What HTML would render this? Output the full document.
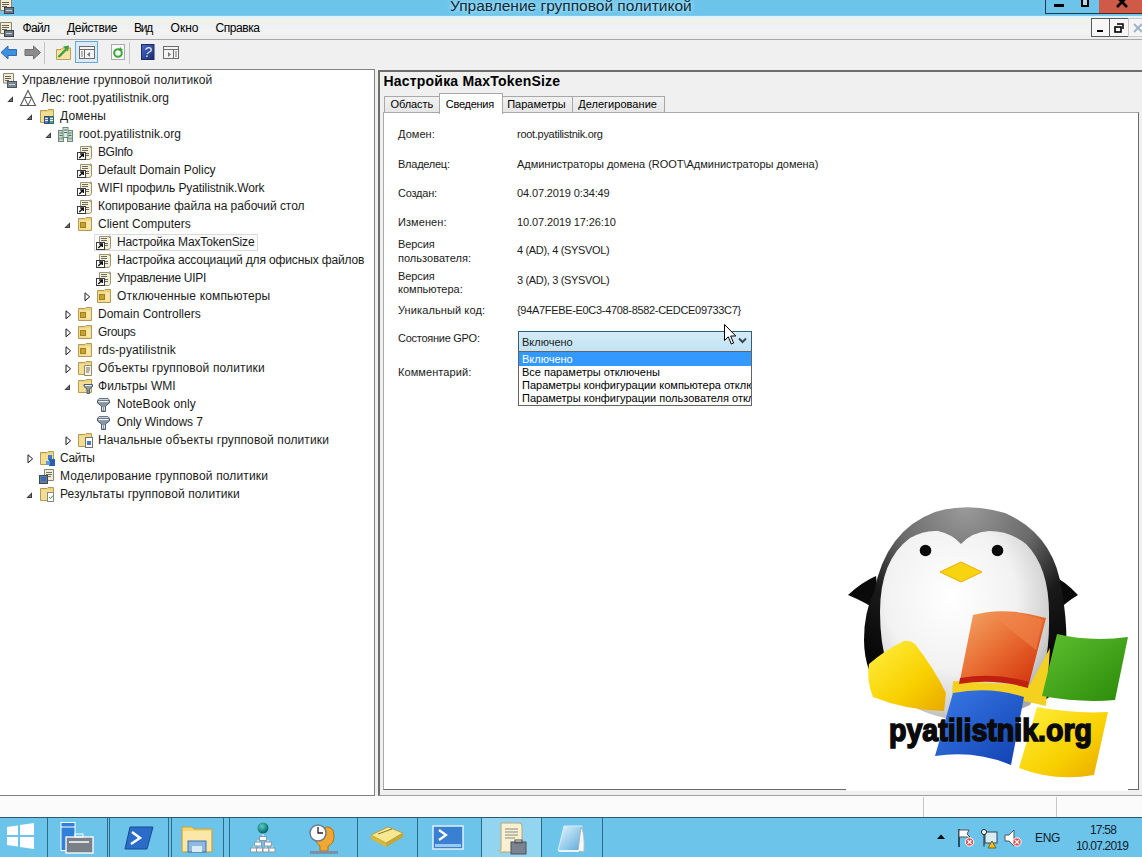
<!DOCTYPE html>
<html><head><meta charset="utf-8"><style>
*{margin:0;padding:0;box-sizing:border-box}
html,body{width:1142px;height:857px;overflow:hidden;background:#f0f0f0;font-family:"Liberation Sans",sans-serif;color:#000}
.a{position:absolute}
.t12{font-size:12px;line-height:18px;white-space:nowrap}
.t11{font-size:11px;line-height:13px;white-space:nowrap}
svg{position:absolute;overflow:visible}
</style></head><body>

<div class="a" style="left:0;top:0;width:1142px;height:16px;background:#6cc4ea"></div>
<div class="a" style="left:0;top:15px;width:1142px;height:1px;background:#7ccbec"></div>
<div class="a" style="left:450px;top:-3px;font-size:15.5px;line-height:18px;color:#0e2a3a;white-space:nowrap;text-shadow:0 0 4px #bfeaf8,0 0 6px #a8e0f4">Управление групповой политикой</div>
<div class="a" style="left:1045px;top:-2px;width:29px;height:16px;border:1.5px solid #1a3d52;background:#6cc4ea"></div>
<div class="a" style="left:1054px;top:4px;width:10px;height:3px;background:#000"></div>
<div class="a" style="left:1072px;top:-2px;width:28px;height:16px;border:1.5px solid #1a3d52;border-left:none;background:#6cc4ea"></div>
<div class="a" style="left:1081px;top:-2px;width:8px;height:9px;border:2px solid #000;background:#b9d7e6"></div>
<div class="a" style="left:1099px;top:-2px;width:43px;height:16px;background:#cf5a48;border-bottom:1.5px solid #4a2a28"></div>
<svg style="left:1116px;top:-3px" width="12" height="11"><path d="M1 0 L11 10 M11 0 L1 10" stroke="#000" stroke-width="2.6"/></svg>
<svg style="left:-1px;top:-2px" width="16" height="16"><path d="M1.5 1.5 H11 Q13 0.5 12.5 3 V12.5 H1.5Z" fill="#f3ecd0" stroke="#8a8470"/><path d="M3 4.5h7M3 6.5h7M3 8.5h5" stroke="#606060"/><rect x="5.5" y="9.5" width="9" height="6" fill="#6f7a86" stroke="#3a4450"/><path d="M7 12.5h6" stroke="#c8d0d8"/></svg>
<div class="a" style="left:0;top:16px;width:1142px;height:23px;background:linear-gradient(#dcf3fb 0px,#f3f3ea 5px,#f2f0e6 7px,#e9f3fb 11px,#f4f1ee 14px,#f1f1f1 18px,#ededed 23px)"></div>
<div class="a" style="left:0;top:39px;width:1142px;height:1px;background:#a8a8a8"></div>
<svg style="left:-1px;top:21px" width="16" height="16"><path d="M1.5 1.5 H11 Q13 0.5 12.5 3 V12.5 H1.5Z" fill="#f3ecd0" stroke="#8a8470"/><path d="M3 4.5h7M3 6.5h7M3 8.5h5" stroke="#606060"/><rect x="5.5" y="9.5" width="9" height="6" fill="#6f7a86" stroke="#3a4450"/><path d="M7 12.5h6" stroke="#c8d0d8"/></svg>
<div class="a t12" style="left:22.5px;top:19px;letter-spacing:-0.633px;">Файл</div>
<div class="a t12" style="left:67px;top:19px;letter-spacing:-0.321px;">Действие</div>
<div class="a t12" style="left:134px;top:19px;letter-spacing:-1.202px;">Вид</div>
<div class="a t12" style="left:170.5px;top:19px;letter-spacing:0.042px;">Окно</div>
<div class="a t12" style="left:215.5px;top:19px;letter-spacing:-0.430px;">Справка</div>
<div class="a" style="left:1091px;top:18px;width:19px;height:19px;border:1px solid #5a5a5a;background:#f7f7f7"></div>
<div class="a" style="left:1097px;top:30px;width:6px;height:2px;background:#000"></div>
<div class="a" style="left:1109px;top:18px;width:20px;height:19px;border:1px solid #5a5a5a;background:#f7f7f7"></div>
<svg style="left:1114px;top:23px" width="10" height="10"><path d="M3 1h6v5" fill="none" stroke="#000" stroke-width="1.5"/><rect x="1" y="4" width="6" height="5" fill="none" stroke="#000" stroke-width="1.6"/></svg>
<div class="a" style="left:1128px;top:18px;width:14px;height:19px;border:1px solid #c8c8c8;border-right:none;background:#f5f5f5"></div>
<svg style="left:1133px;top:23px" width="10" height="10"><path d="M1 1L9 9M9 1L1 9" stroke="#9fb4c8" stroke-width="2"/></svg>
<div class="a" style="left:0;top:40px;width:1142px;height:28px;background:#f0f0f0"></div>
<svg style="left:0;top:45px" width="18" height="15"><path d="M1 7.5 L8 1 V4.5 H16.5 V10.5 H8 V14 Z" fill="#3f8fdc" stroke="#2a6cb0" stroke-width="1"/></svg>
<svg style="left:24px;top:45px" width="18" height="15"><path d="M16.5 7.5 L9.5 1 V4.5 H1 V10.5 H9.5 V14 Z" fill="#8c8c8c" stroke="#6e6e6e" stroke-width="1"/></svg>
<div class="a" style="left:44px;top:42px;width:1px;height:22px;background:#c5c5c5"></div>
<svg style="left:55px;top:44px" width="17" height="17"><path d="M1.5 5.5 H6 L7.5 4 H15.5 V15.5 H1.5Z" fill="#f2d98a" stroke="#c0a050"/><rect x="2" y="7" width="13" height="8" fill="#f6e3a8"/><path d="M3.5 13 L11 5.5" stroke="#3aa040" stroke-width="2.4"/><path d="M8 2.5 L14 1.5 L13 7.5Z" fill="#3aa040"/></svg>
<div class="a" style="left:75px;top:41px;width:23px;height:22px;border:1px solid #69a7d4;background:#d7ebf8"></div>
<svg style="left:79px;top:46px" width="16" height="13"><rect x="0.5" y="0.5" width="15" height="12" fill="#f4f4f4" stroke="#6d6d6d"/><path d="M0.5 3.5h15M5.5 3.5v9" stroke="#6d6d6d"/><path d="M2 6h2M2 8h2M2 10h2" stroke="#777"/><path d="M11 6 L8 8.5 L11 11Z" fill="#777"/></svg>
<svg style="left:111px;top:44px" width="14" height="16"><rect x="0.5" y="0.5" width="13" height="15" fill="#f8f8f8" stroke="#aaa"/><circle cx="7" cy="9" r="3.8" fill="none" stroke="#3aa63a" stroke-width="2"/><path d="M9 3 L12 6 L8 7Z" fill="#3aa63a"/></svg>
<div class="a" style="left:129px;top:42px;width:1px;height:22px;background:#c5c5c5"></div>
<svg style="left:141px;top:44px" width="14" height="16"><defs><linearGradient id="hq" x1="0" y1="0" x2="1" y2="1"><stop offset="0" stop-color="#4a6cc8"/><stop offset="1" stop-color="#1a2a70"/></linearGradient></defs><rect x="0.5" y="0.5" width="12.5" height="15" fill="url(#hq)" stroke="#1d2a66"/><text x="6.8" y="13" font-size="14" font-family="Liberation Sans" font-style="italic" fill="#dfe8ff" text-anchor="middle">?</text></svg>
<svg style="left:163px;top:46px" width="17" height="13"><rect x="0.5" y="0.5" width="15" height="12" fill="#f4f4f4" stroke="#6d6d6d"/><path d="M0.5 3.5h15M10.5 3.5v9" stroke="#6d6d6d"/><path d="M12 6h2M12 8h2M12 10h2" stroke="#777"/><path d="M5 6 L8 8.5 L5 11Z" fill="#777"/></svg>
<div class="a" style="left:0;top:69px;width:375px;height:727px;background:#fff;border-top:1px solid #828282;border-right:1px solid #828282;border-bottom:1px solid #828282"></div>
<svg style="left:1px;top:72px" width="16" height="16"><path d="M2.5 1.5 H11 Q13 0.5 12.5 3 V11 H2.5Z" fill="#f3ecd0" stroke="#8a8470"/><path d="M4 4.5h6M4 6.5h6M4 8.5h4" stroke="#606060"/><rect x="6.5" y="9.5" width="9" height="6" fill="#7a8794" stroke="#4a5560"/><path d="M8 12.5h6" stroke="#c8d0d8"/></svg>
<div class="a t12" style="left:22px;top:71px;color:#1a1a1a;letter-spacing:0.109px;">Управление групповой политикой</div>
<svg style="left:7px;top:96px" width="7" height="7"><path d="M6 0.3 V6 H0.3Z" fill="#3a3a3a"/><path d="M5 2.5 V5 H2.5Z" fill="#7a7a7a"/></svg>
<svg style="left:20px;top:90px" width="17" height="17"><path d="M8 0.5 L15.5 15.5 H0.5Z" fill="#fafafa" stroke="#5a5a5a" stroke-width="1.1" stroke-linejoin="miter"/><path d="M4.2 7.5 H11.8 L8 15.2Z" fill="#fff" stroke="#5a5a5a" stroke-width="1"/></svg>
<div class="a t12" style="left:41px;top:89px;color:#1a1a1a;letter-spacing:0.031px;">Лес: root.pyatilistnik.org</div>
<svg style="left:26px;top:114px" width="7" height="7"><path d="M6 0.3 V6 H0.3Z" fill="#3a3a3a"/><path d="M5 2.5 V5 H2.5Z" fill="#7a7a7a"/></svg>
<svg style="left:39px;top:108px" width="16" height="16"><path d="M1.5 2.5 H8 L9 1.5 H14.5 V14.5 H1.5Z" fill="#ecd27c" stroke="#b49a54"/><rect x="2" y="4" width="12" height="10" fill="#f3dd92"/><rect x="5.5" y="8.5" width="4" height="7" fill="#5a7aa8" stroke="#33507a"/><rect x="10.5" y="8.5" width="4" height="7" fill="#5a9a98" stroke="#336a68"/><path d="M6 10.5h3M6 12.5h3M11 10.5h3M11 12.5h3" stroke="#e8f0f8"/></svg>
<div class="a t12" style="left:60px;top:107px;color:#1a1a1a;letter-spacing:0.138px;">Домены</div>
<svg style="left:45px;top:132px" width="7" height="7"><path d="M6 0.3 V6 H0.3Z" fill="#3a3a3a"/><path d="M5 2.5 V5 H2.5Z" fill="#7a7a7a"/></svg>
<svg style="left:58px;top:126px" width="16" height="16"><rect x="0.5" y="4.5" width="5" height="11" fill="#c8dcd0" stroke="#6a8a78"/><rect x="9.5" y="4.5" width="5" height="11" fill="#c8dcd0" stroke="#6a8a78"/><rect x="5" y="1.5" width="5" height="10" fill="#d8e8e0" stroke="#6a8a78"/><path d="M1.5 7h3M1.5 9.5h3M10.5 7h3M10.5 9.5h3M6 4h3M6 6.5h3" stroke="#506a5a"/><path d="M1 12.5h4M10 12.5h4" stroke="#90aa98" stroke-width="2"/></svg>
<div class="a t12" style="left:79px;top:125px;color:#1a1a1a;letter-spacing:0.098px;">root.pyatilistnik.org</div>
<svg style="left:77px;top:144px" width="16" height="16"><path d="M3.5 2.5 H12.5 Q14.5 1 14.5 3 V13.5 Q14 15.5 12 15.5 H3.5Z" fill="#f4efd2" stroke="#9a9478"/><path d="M12.5 2.5 Q12.5 4 14.5 3.5" fill="none" stroke="#9a9478"/><path d="M5 4.5h6M5 6.5h6M9 9.5h3M9 11.5h3" stroke="#6a6a6a" stroke-width="1"/><rect x="0.5" y="8.5" width="8" height="7" fill="#fff" stroke="#3a3a3a"/><path d="M2.3 14 L6 10.3 M3.2 10 H6.3 V13" stroke="#101010" stroke-width="1.4" fill="none"/></svg>
<div class="a t12" style="left:98px;top:143px;color:#1a1a1a;letter-spacing:-0.466px;">BGInfo</div>
<svg style="left:77px;top:162px" width="16" height="16"><path d="M3.5 2.5 H12.5 Q14.5 1 14.5 3 V13.5 Q14 15.5 12 15.5 H3.5Z" fill="#f4efd2" stroke="#9a9478"/><path d="M12.5 2.5 Q12.5 4 14.5 3.5" fill="none" stroke="#9a9478"/><path d="M5 4.5h6M5 6.5h6M9 9.5h3M9 11.5h3" stroke="#6a6a6a" stroke-width="1"/><rect x="0.5" y="8.5" width="8" height="7" fill="#fff" stroke="#3a3a3a"/><path d="M2.3 14 L6 10.3 M3.2 10 H6.3 V13" stroke="#101010" stroke-width="1.4" fill="none"/></svg>
<div class="a t12" style="left:98px;top:161px;color:#1a1a1a;letter-spacing:-0.022px;">Default Domain Policy</div>
<svg style="left:77px;top:180px" width="16" height="16"><path d="M3.5 2.5 H12.5 Q14.5 1 14.5 3 V13.5 Q14 15.5 12 15.5 H3.5Z" fill="#f4efd2" stroke="#9a9478"/><path d="M12.5 2.5 Q12.5 4 14.5 3.5" fill="none" stroke="#9a9478"/><path d="M5 4.5h6M5 6.5h6M9 9.5h3M9 11.5h3" stroke="#6a6a6a" stroke-width="1"/><rect x="0.5" y="8.5" width="8" height="7" fill="#fff" stroke="#3a3a3a"/><path d="M2.3 14 L6 10.3 M3.2 10 H6.3 V13" stroke="#101010" stroke-width="1.4" fill="none"/></svg>
<div class="a t12" style="left:98px;top:179px;color:#1a1a1a;letter-spacing:-0.098px;">WIFI профиль Pyatilistnik.Work</div>
<svg style="left:77px;top:198px" width="16" height="16"><path d="M3.5 2.5 H12.5 Q14.5 1 14.5 3 V13.5 Q14 15.5 12 15.5 H3.5Z" fill="#f4efd2" stroke="#9a9478"/><path d="M12.5 2.5 Q12.5 4 14.5 3.5" fill="none" stroke="#9a9478"/><path d="M5 4.5h6M5 6.5h6M9 9.5h3M9 11.5h3" stroke="#6a6a6a" stroke-width="1"/><rect x="0.5" y="8.5" width="8" height="7" fill="#fff" stroke="#3a3a3a"/><path d="M2.3 14 L6 10.3 M3.2 10 H6.3 V13" stroke="#101010" stroke-width="1.4" fill="none"/></svg>
<div class="a t12" style="left:98px;top:197px;color:#1a1a1a;letter-spacing:-0.037px;">Копирование файла на рабочий стол</div>
<svg style="left:64px;top:222px" width="7" height="7"><path d="M6 0.3 V6 H0.3Z" fill="#3a3a3a"/><path d="M5 2.5 V5 H2.5Z" fill="#7a7a7a"/></svg>
<svg style="left:77px;top:216px" width="16" height="16"><path d="M1.5 2.5 H8 L9 1.5 H14.5 V14.5 H1.5Z" fill="#ecd27c" stroke="#b49a54"/><rect x="2" y="4" width="12" height="10" fill="#f3dd92"/><rect x="3.5" y="6.5" width="5" height="5" fill="#c8a22c" stroke="#a08020"/><rect x="9.5" y="5" width="4" height="8" fill="#f8e8a8"/></svg>
<div class="a t12" style="left:98px;top:215px;color:#1a1a1a;letter-spacing:-0.000px;">Client Computers</div>
<div class="a" style="left:94px;top:234px;width:164px;height:17px;border:1px solid #dadada;background:#fbfbfb"></div>
<svg style="left:96px;top:234px" width="16" height="16"><path d="M3.5 2.5 H12.5 Q14.5 1 14.5 3 V13.5 Q14 15.5 12 15.5 H3.5Z" fill="#f4efd2" stroke="#9a9478"/><path d="M12.5 2.5 Q12.5 4 14.5 3.5" fill="none" stroke="#9a9478"/><path d="M5 4.5h6M5 6.5h6M9 9.5h3M9 11.5h3" stroke="#6a6a6a" stroke-width="1"/><rect x="0.5" y="8.5" width="8" height="7" fill="#fff" stroke="#3a3a3a"/><path d="M2.3 14 L6 10.3 M3.2 10 H6.3 V13" stroke="#101010" stroke-width="1.4" fill="none"/></svg>
<div class="a t12" style="left:117px;top:233px;color:#1a1a1a;letter-spacing:-0.135px;">Настройка MaxTokenSize</div>
<svg style="left:96px;top:252px" width="16" height="16"><path d="M3.5 2.5 H12.5 Q14.5 1 14.5 3 V13.5 Q14 15.5 12 15.5 H3.5Z" fill="#f4efd2" stroke="#9a9478"/><path d="M12.5 2.5 Q12.5 4 14.5 3.5" fill="none" stroke="#9a9478"/><path d="M5 4.5h6M5 6.5h6M9 9.5h3M9 11.5h3" stroke="#6a6a6a" stroke-width="1"/><rect x="0.5" y="8.5" width="8" height="7" fill="#fff" stroke="#3a3a3a"/><path d="M2.3 14 L6 10.3 M3.2 10 H6.3 V13" stroke="#101010" stroke-width="1.4" fill="none"/></svg>
<div class="a t12" style="left:117px;top:251px;color:#1a1a1a;letter-spacing:-0.143px;">Настройка ассоциаций для офисных файлов</div>
<svg style="left:96px;top:270px" width="16" height="16"><path d="M3.5 2.5 H12.5 Q14.5 1 14.5 3 V13.5 Q14 15.5 12 15.5 H3.5Z" fill="#f4efd2" stroke="#9a9478"/><path d="M12.5 2.5 Q12.5 4 14.5 3.5" fill="none" stroke="#9a9478"/><path d="M5 4.5h6M5 6.5h6M9 9.5h3M9 11.5h3" stroke="#6a6a6a" stroke-width="1"/><rect x="0.5" y="8.5" width="8" height="7" fill="#fff" stroke="#3a3a3a"/><path d="M2.3 14 L6 10.3 M3.2 10 H6.3 V13" stroke="#101010" stroke-width="1.4" fill="none"/></svg>
<div class="a t12" style="left:117px;top:269px;color:#1a1a1a;letter-spacing:-0.290px;">Управление UIPI</div>
<svg style="left:84px;top:292px" width="7" height="10"><path d="M1 0.8 L5.6 4.8 L1 8.8Z" fill="#fff" stroke="#1a1a1a" stroke-width="1"/></svg>
<svg style="left:96px;top:288px" width="16" height="16"><path d="M1.5 2.5 H8 L9 1.5 H14.5 V14.5 H1.5Z" fill="#ecd27c" stroke="#b49a54"/><rect x="2" y="4" width="12" height="10" fill="#f3dd92"/><rect x="3.5" y="6.5" width="5" height="5" fill="#c8a22c" stroke="#a08020"/><rect x="9.5" y="5" width="4" height="8" fill="#f8e8a8"/></svg>
<div class="a t12" style="left:117px;top:287px;color:#1a1a1a;letter-spacing:0.158px;">Отключенные компьютеры</div>
<svg style="left:65px;top:310px" width="7" height="10"><path d="M1 0.8 L5.6 4.8 L1 8.8Z" fill="#fff" stroke="#1a1a1a" stroke-width="1"/></svg>
<svg style="left:77px;top:306px" width="16" height="16"><path d="M1.5 2.5 H8 L9 1.5 H14.5 V14.5 H1.5Z" fill="#ecd27c" stroke="#b49a54"/><rect x="2" y="4" width="12" height="10" fill="#f3dd92"/><rect x="3.5" y="6.5" width="5" height="5" fill="#c8a22c" stroke="#a08020"/><rect x="9.5" y="5" width="4" height="8" fill="#f8e8a8"/></svg>
<div class="a t12" style="left:98px;top:305px;color:#1a1a1a;letter-spacing:-0.001px;">Domain Controllers</div>
<svg style="left:65px;top:328px" width="7" height="10"><path d="M1 0.8 L5.6 4.8 L1 8.8Z" fill="#fff" stroke="#1a1a1a" stroke-width="1"/></svg>
<svg style="left:77px;top:324px" width="16" height="16"><path d="M1.5 2.5 H8 L9 1.5 H14.5 V14.5 H1.5Z" fill="#ecd27c" stroke="#b49a54"/><rect x="2" y="4" width="12" height="10" fill="#f3dd92"/><rect x="3.5" y="6.5" width="5" height="5" fill="#c8a22c" stroke="#a08020"/><rect x="9.5" y="5" width="4" height="8" fill="#f8e8a8"/></svg>
<div class="a t12" style="left:98px;top:323px;color:#1a1a1a;letter-spacing:-0.309px;">Groups</div>
<svg style="left:65px;top:346px" width="7" height="10"><path d="M1 0.8 L5.6 4.8 L1 8.8Z" fill="#fff" stroke="#1a1a1a" stroke-width="1"/></svg>
<svg style="left:77px;top:342px" width="16" height="16"><path d="M1.5 2.5 H8 L9 1.5 H14.5 V14.5 H1.5Z" fill="#ecd27c" stroke="#b49a54"/><rect x="2" y="4" width="12" height="10" fill="#f3dd92"/><rect x="3.5" y="6.5" width="5" height="5" fill="#c8a22c" stroke="#a08020"/><rect x="9.5" y="5" width="4" height="8" fill="#f8e8a8"/></svg>
<div class="a t12" style="left:98px;top:341px;color:#1a1a1a;letter-spacing:0.111px;">rds-pyatilistnik</div>
<svg style="left:65px;top:364px" width="7" height="10"><path d="M1 0.8 L5.6 4.8 L1 8.8Z" fill="#fff" stroke="#1a1a1a" stroke-width="1"/></svg>
<svg style="left:77px;top:360px" width="16" height="16"><path d="M1.5 2.5 H8 L9 1.5 H14.5 V14.5 H1.5Z" fill="#ecd27c" stroke="#b49a54"/><rect x="2" y="4" width="12" height="10" fill="#f3dd92"/><path d="M7.5 5.5 H14.5 V15.5 H7.5Z" fill="#f8f3dc" stroke="#8f8a72"/><path d="M9 8h4M9 10h4M9 12h3" stroke="#707070"/></svg>
<div class="a t12" style="left:98px;top:359px;color:#1a1a1a;letter-spacing:0.140px;">Объекты групповой политики</div>
<svg style="left:64px;top:384px" width="7" height="7"><path d="M6 0.3 V6 H0.3Z" fill="#3a3a3a"/><path d="M5 2.5 V5 H2.5Z" fill="#7a7a7a"/></svg>
<svg style="left:77px;top:378px" width="16" height="16"><path d="M1.5 2.5 H8 L9 1.5 H14.5 V14.5 H1.5Z" fill="#ecd27c" stroke="#b49a54"/><rect x="2" y="4" width="12" height="10" fill="#f3dd92"/><path d="M7 6.5 H15.5 V8.5 L12.5 11 V15.5 H10 V11 L7 8.5Z" fill="#8a9aa8" stroke="#4e5c68"/><path d="M8 7.5h6.5" stroke="#e8f0f4"/></svg>
<div class="a t12" style="left:98px;top:377px;color:#1a1a1a;letter-spacing:0.078px;">Фильтры WMI</div>
<svg style="left:96px;top:396px" width="16" height="17"><path d="M1.5 4.5 H13.5 V7 L9.5 10 V15.5 H5.5 V10 L1.5 7Z" fill="#8796a4" stroke="#4e5c68"/><path d="M2.5 5.5 H12.5" stroke="#f0f4f8" stroke-width="1.2"/><path d="M3 2.5 H12 L13.5 4.5 H1.5Z" fill="#c8d4dc" stroke="#6a7884"/><path d="M6.5 11v3.5M8.5 11v3.5" stroke="#d8e2ea"/></svg>
<div class="a t12" style="left:117px;top:395px;color:#1a1a1a;letter-spacing:0.056px;">NoteBook only</div>
<svg style="left:96px;top:414px" width="16" height="17"><path d="M1.5 4.5 H13.5 V7 L9.5 10 V15.5 H5.5 V10 L1.5 7Z" fill="#8796a4" stroke="#4e5c68"/><path d="M2.5 5.5 H12.5" stroke="#f0f4f8" stroke-width="1.2"/><path d="M3 2.5 H12 L13.5 4.5 H1.5Z" fill="#c8d4dc" stroke="#6a7884"/><path d="M6.5 11v3.5M8.5 11v3.5" stroke="#d8e2ea"/></svg>
<div class="a t12" style="left:117px;top:413px;color:#1a1a1a;letter-spacing:-0.053px;">Only Windows 7</div>
<svg style="left:65px;top:436px" width="7" height="10"><path d="M1 0.8 L5.6 4.8 L1 8.8Z" fill="#fff" stroke="#1a1a1a" stroke-width="1"/></svg>
<svg style="left:77px;top:432px" width="16" height="16"><path d="M1.5 2.5 H8 L9 1.5 H14.5 V14.5 H1.5Z" fill="#ecd27c" stroke="#b49a54"/><rect x="2" y="4" width="12" height="10" fill="#f3dd92"/><rect x="8.5" y="5.5" width="7" height="10" fill="#fff" stroke="#707070"/><rect x="10" y="9" width="4" height="4" fill="#4a7cc8"/></svg>
<div class="a t12" style="left:98px;top:431px;color:#1a1a1a;letter-spacing:0.110px;">Начальные объекты групповой политики</div>
<svg style="left:27px;top:454px" width="7" height="10"><path d="M1 0.8 L5.6 4.8 L1 8.8Z" fill="#fff" stroke="#1a1a1a" stroke-width="1"/></svg>
<svg style="left:39px;top:450px" width="16" height="16"><path d="M1.5 2.5 H8 L9 1.5 H14.5 V14.5 H1.5Z" fill="#ecd27c" stroke="#b49a54"/><rect x="2" y="4" width="12" height="10" fill="#f3dd92"/><rect x="9" y="5" width="4" height="5" fill="#3b7ad0"/><rect x="10" y="9" width="6" height="7" fill="#2a5fb0"/><rect x="7" y="11" width="4" height="4" fill="#5a9ae0"/></svg>
<div class="a t12" style="left:60px;top:449px;color:#1a1a1a;letter-spacing:-0.378px;">Сайты</div>
<svg style="left:39px;top:468px" width="16" height="16"><path d="M5.5 1.5 H14.5 V12.5 H5.5Z" fill="#f3ecd0" stroke="#8a8470"/><path d="M7 4.5h6M7 6.5h6M7 8.5h5" stroke="#707070"/><rect x="0.5" y="7.5" width="8" height="8" fill="#6a7a8a" stroke="#3a4a5a"/><rect x="2" y="9" width="5" height="4" fill="#3a6ac0"/></svg>
<div class="a t12" style="left:60px;top:467px;color:#1a1a1a;letter-spacing:0.145px;">Моделирование групповой политики</div>
<svg style="left:26px;top:492px" width="7" height="7"><path d="M6 0.3 V6 H0.3Z" fill="#3a3a3a"/><path d="M5 2.5 V5 H2.5Z" fill="#7a7a7a"/></svg>
<svg style="left:39px;top:486px" width="16" height="16"><path d="M1.5 2.5 H8 L9 1.5 H14.5 V14.5 H1.5Z" fill="#ecd27c" stroke="#b49a54"/><rect x="2" y="4" width="12" height="10" fill="#f3dd92"/><rect x="8.5" y="6.5" width="6" height="9" fill="#fff" stroke="#888"/><path d="M10 11l1.5 1.5 2.5-3" stroke="#3a8a3a" fill="none"/></svg>
<div class="a t12" style="left:60px;top:485px;color:#1a1a1a;letter-spacing:0.101px;">Результаты групповой политики</div>
<div class="a" style="left:378px;top:69.5px;width:764px;height:726.5px;background:#f0f0f0;border-top:2px solid #6e6e6e;border-left:2px solid #6e6e6e;border-bottom:1px solid #a0a0a0"></div>
<div class="a" style="left:383.5px;top:69px;font-size:14px;line-height:24px;font-weight:bold;letter-spacing:0.2px;white-space:nowrap">Настройка MaxTokenSize</div>
<div class="a" style="left:383px;top:112px;width:756px;height:678px;background:#fff;border:1px solid #a8a8a8;border-right:1px solid #6a6a6a;border-bottom:1px solid #6a6a6a"></div>
<div class="a" style="left:384px;top:95.5px;width:56px;height:17.5px;background:linear-gradient(#f2f2f2,#e6e6e6);border:1px solid #a8a8a8"></div>
<div class="a t11" style="left:390.6px;top:98px;letter-spacing:-0.095px;">Область</div>
<div class="a" style="left:439px;top:93px;width:64px;height:21px;background:#fff;border:1px solid #a8a8a8;border-bottom:none"></div>
<div class="a t11" style="left:445.8px;top:97.5px;letter-spacing:-0.267px;">Сведения</div>
<div class="a" style="left:502px;top:95.5px;width:71px;height:17.5px;background:linear-gradient(#f2f2f2,#e6e6e6);border:1px solid #a8a8a8"></div>
<div class="a t11" style="left:507.2px;top:98px;letter-spacing:-0.009px;">Параметры</div>
<div class="a" style="left:572px;top:95.5px;width:93px;height:17.5px;background:linear-gradient(#f2f2f2,#e6e6e6);border:1px solid #a8a8a8"></div>
<div class="a t11" style="left:578.2px;top:98px;letter-spacing:0.037px;">Делегирование</div>
<div class="a t11" style="left:398px;top:128px;color:#1a1a1a;letter-spacing:0.054px;">Домен:</div>
<div class="a t11" style="left:398px;top:158px;color:#1a1a1a;letter-spacing:-0.248px;">Владелец:</div>
<div class="a t11" style="left:398px;top:187px;color:#1a1a1a;letter-spacing:-0.206px;">Создан:</div>
<div class="a t11" style="left:398px;top:216px;color:#1a1a1a;letter-spacing:0.074px;">Изменен:</div>
<div class="a t11" style="left:398px;top:238px;color:#1a1a1a;letter-spacing:-0.078px;">Версия</div>
<div class="a t11" style="left:398px;top:252px;color:#1a1a1a;letter-spacing:0.020px;">пользователя:</div>
<div class="a t11" style="left:398px;top:270px;color:#1a1a1a;letter-spacing:-0.078px;">Версия</div>
<div class="a t11" style="left:398px;top:283px;color:#1a1a1a;letter-spacing:0.013px;">компьютера:</div>
<div class="a t11" style="left:398px;top:304px;color:#1a1a1a;letter-spacing:0.105px;">Уникальный код:</div>
<div class="a t11" style="left:398px;top:332px;color:#1a1a1a;letter-spacing:-0.268px;">Состояние GPO:</div>
<div class="a t11" style="left:398px;top:366px;color:#1a1a1a;letter-spacing:0.086px;">Комментарий:</div>
<div class="a t11" style="left:517px;top:128px;color:#1a1a1a;letter-spacing:-0.287px;">root.pyatilistnik.org</div>
<div class="a t11" style="left:517px;top:158px;color:#1a1a1a;letter-spacing:-0.027px;">Администраторы домена (ROOT\Администраторы домена)</div>
<div class="a t11" style="left:517px;top:187px;color:#1a1a1a;letter-spacing:-0.126px;">04.07.2019 0:34:49</div>
<div class="a t11" style="left:517px;top:216px;color:#1a1a1a;letter-spacing:-0.115px;">10.07.2019 17:26:10</div>
<div class="a t11" style="left:517px;top:244px;color:#1a1a1a;letter-spacing:-0.333px;">4 (AD), 4 (SYSVOL)</div>
<div class="a t11" style="left:517px;top:274px;color:#1a1a1a;letter-spacing:-0.333px;">3 (AD), 3 (SYSVOL)</div>
<div class="a t11" style="left:517px;top:304px;color:#1a1a1a;letter-spacing:-0.320px;">{94A7FEBE-E0C3-4708-8582-CEDCE09733C7}</div>
<div class="a" style="left:518px;top:331px;width:234px;height:21px;background:linear-gradient(#d4ecf8,#c2e2f4);border:1px solid #2f5f80"></div>
<div class="a t11" style="left:522px;top:336px;color:#1a1a1a;">Включено</div>
<svg style="left:738px;top:337px" width="10" height="8"><path d="M1 1.5 L4.5 5 L8 1.5" fill="none" stroke="#3a4856" stroke-width="2"/></svg>
<div class="a" style="left:518px;top:351px;width:234px;height:55px;background:#fff;border:1px solid #646464;overflow:hidden"><div style="position:absolute;left:0;top:0;width:232px;height:14px;background:#3399ff"></div><div class="t11" style="position:absolute;left:3px;top:1px;color:#fff">Включено</div><div class="t11" style="position:absolute;left:3px;top:14px">Все параметры отключены</div><div class="t11" style="position:absolute;left:3px;top:27px">Параметры конфигурации компьютера отключены</div><div class="t11" style="position:absolute;left:3px;top:40px">Параметры конфигурации пользователя отключены</div></div>
<svg style="left:724px;top:324px" width="14" height="22"><path d="M0.5 0.5 V16.5 L4.3 12.8 L7.3 20 L9.6 19 L6.7 12 H11.8Z" fill="#fff" stroke="#000" stroke-width="1"/></svg>
<svg style="left:840px;top:500px" width="280" height="290" viewBox="0 0 280 290">
<defs>
<radialGradient id="bodyw" cx="42%" cy="35%" r="70%"><stop offset="0" stop-color="#ffffff"/><stop offset="0.55" stop-color="#f2f2f2"/><stop offset="0.85" stop-color="#cfcfcf"/><stop offset="1" stop-color="#a8a8a8"/></radialGradient>
<radialGradient id="head" cx="50%" cy="0%" r="100%"><stop offset="0" stop-color="#9a9a9a"/><stop offset="0.35" stop-color="#6a6a6a"/><stop offset="0.6" stop-color="#1a1a1a"/><stop offset="1" stop-color="#000"/></radialGradient>
<linearGradient id="orng" x1="0" y1="0" x2="1" y2="1"><stop offset="0" stop-color="#f4a868"/><stop offset="0.5" stop-color="#e86a30"/><stop offset="1" stop-color="#d02c08"/></linearGradient>
<linearGradient id="grn" x1="0" y1="0" x2="1" y2="1"><stop offset="0" stop-color="#60c030"/><stop offset="1" stop-color="#2a8a08"/></linearGradient>
<linearGradient id="blu" x1="0" y1="0" x2="1" y2="1"><stop offset="0" stop-color="#3a7ae8"/><stop offset="1" stop-color="#1040b0"/></linearGradient>
<linearGradient id="yel" x1="0" y1="0" x2="1" y2="1"><stop offset="0" stop-color="#fff040"/><stop offset="0.6" stop-color="#f8d000"/><stop offset="1" stop-color="#e8a800"/></linearGradient>
</defs>
<path d="M8 95 Q22 82 36 76 L40 112 Q25 102 8 95Z" fill="#0a0a0a"/>
<path d="M238 95 Q224 80 212 76 L214 114 Q226 102 238 95Z" fill="#0a0a0a"/>
<path d="M34 92 Q46 30 95 12 Q128 2 165 13 Q215 35 222 92 Q228 125 226 160 Q222 190 205 200 L45 200 Q24 172 24 140 Q24 112 34 92Z" fill="url(#head)"/>
<path d="M40 112 Q40 60 70 38 Q84 30 98 31 Q112 34 121 44 Q132 32 149 31 Q170 31 186 44 Q210 68 209 118 Q210 170 190 205 Q125 235 70 205 Q40 175 40 112Z" fill="url(#bodyw)"/>
<circle cx="85.5" cy="50.5" r="5.8" fill="#0a0a0a"/>
<circle cx="157.5" cy="50.5" r="5.8" fill="#0a0a0a"/>
<path d="M100 72 L121 62 L142 72 L121 82Z" fill="#f8d410" stroke="#e8b000" stroke-width="1" stroke-linejoin="round"/>
<path d="M29 164 Q45 150 64 141 Q70 140 75 144 Q95 170 106 193 L104 211 Q65 210 33 197 Q26 180 29 164Z" fill="url(#yel)"/>
<path d="M113 181 L190 185 L210 148 L206 206 L184 201 L112 196Z" fill="#f4d020"/>
<path d="M133 115 Q165 106 206 118 L189 184 Q155 174 120 180Z" fill="url(#orng)"/>
<path d="M150 112 Q175 110 203 120 L196 150 Q170 130 150 112Z" fill="#f08850" opacity="0.55"/>
<path d="M120 178 Q155 172 189 182 L188 188 Q155 178 119 184Z" fill="#c02010"/>
<path d="M217 134 Q250 142 288 137 L275 200 Q240 203 202 196Z" fill="url(#grn)"/>
<path d="M113 193 Q150 186 184 197 L171 265 Q135 250 95 256Z" fill="url(#blu)"/>
<path d="M197 207 Q235 214 268 212 L254 275 Q215 282 179 268Z" fill="url(#yel)"/>
<text x="49" y="241" font-family="Liberation Sans" font-weight="bold" font-size="31" fill="#0a0a0a" stroke="#0a0a0a" stroke-width="1.6" textLength="203" lengthAdjust="spacingAndGlyphs">pyatilistnik.org</text>
</svg>
<div class="a" style="left:846px;top:788.5px;width:282px;height:2.5px;background:#fdfdfd"></div>
<div class="a" style="left:0;top:796px;width:1142px;height:21px;background:#fbfbfb"></div>
<div class="a" style="left:923px;top:797px;width:1px;height:20px;background:#c8c8c8"></div>
<div class="a" style="left:1056px;top:797px;width:1px;height:20px;background:#c8c8c8"></div>
<div class="a" style="left:0;top:817px;width:1142px;height:40px;background:#6cc4ea;border-top:1px solid #2a5a70"></div>
<div class="a" style="left:481px;top:818px;width:60px;height:39px;background:#93d4f0"></div>
<div class="a" style="left:47px;top:818px;width:1px;height:39px;background:#2d6c88"></div>
<div class="a" style="left:107px;top:818px;width:1px;height:39px;background:#2d6c88"></div>
<div class="a" style="left:109px;top:818px;width:1px;height:39px;background:#2d6c88"></div>
<div class="a" style="left:168px;top:818px;width:1px;height:39px;background:#2d6c88"></div>
<div class="a" style="left:171px;top:818px;width:1px;height:39px;background:#2d6c88"></div>
<div class="a" style="left:223px;top:818px;width:1px;height:39px;background:#2d6c88"></div>
<div class="a" style="left:229px;top:818px;width:1px;height:39px;background:#2d6c88"></div>
<div class="a" style="left:357px;top:818px;width:1px;height:39px;background:#2d6c88"></div>
<div class="a" style="left:417px;top:818px;width:1px;height:39px;background:#2d6c88"></div>
<div class="a" style="left:481px;top:818px;width:1px;height:39px;background:#2d6c88"></div>
<div class="a" style="left:541px;top:818px;width:1px;height:39px;background:#2d6c88"></div>
<div class="a" style="left:602px;top:818px;width:1px;height:39px;background:#2d6c88"></div>
<svg style="left:7px;top:823px" width="28" height="26"><path d="M0 4 L11 2.5 V12 H0Z M13 2 L27 0 V12 H13Z M0 14 H11 V23.5 L0 22Z M13 14 H27 V26 L13 24Z" fill="#fff"/></svg>
<svg style="left:60px;top:822px" width="34" height="33"><rect x="1" y="0.5" width="14" height="28" fill="#2f7ed8" stroke="#fff"/><path d="M1 5h14" stroke="#fff"/><rect x="6" y="15" width="27" height="16" fill="#7a8088" stroke="#fff" stroke-width="1.3"/><path d="M9 20h20" stroke="#fff" stroke-width="1.5"/><rect x="15" y="12" width="8" height="3" fill="none" stroke="#fff"/></svg>
<svg style="left:124px;top:826px" width="30" height="24"><path d="M6 1 H29 L23 23 H1Z" fill="#2a6cc8" stroke="#1a4a90"/><path d="M8 6 L16 12 L7 18" fill="none" stroke="#fff" stroke-width="2.5"/></svg>
<svg style="left:181px;top:823px" width="32" height="30"><path d="M1 4 H11 L13 6 H31 V29 H1Z" fill="#f6d670" stroke="#c8a040"/><rect x="2" y="8" width="28" height="20" fill="#fbe8a8"/><rect x="7" y="18" width="18" height="11" fill="#8fb8e0" stroke="#3a70b0"/><rect x="11" y="23" width="10" height="6" fill="#d8ecf8"/></svg>
<svg style="left:250px;top:822px" width="26" height="33"><defs><radialGradient id="gl" cx="40%" cy="35%" r="60%"><stop offset="0" stop-color="#5ad0c0"/><stop offset="1" stop-color="#0a6a70"/></radialGradient></defs><circle cx="13" cy="6" r="5.5" fill="url(#gl)"/><path d="M13 12v2M8 18v2M18 18v2M4 24v2M10 24v2M16 24v2M22 24v2" stroke="#fff"/><rect x="9.5" y="14.5" width="7" height="4" fill="#fafafa" stroke="#8a9aa8"/><rect x="4.5" y="20" width="7" height="4" fill="#fafafa" stroke="#8a9aa8"/><rect x="14.5" y="20" width="7" height="4" fill="#fafafa" stroke="#8a9aa8"/><rect x="0.5" y="26" width="6" height="4" fill="#fafafa" stroke="#8a9aa8"/><rect x="6.5" y="26" width="6" height="4" fill="#fafafa" stroke="#8a9aa8"/><rect x="13" y="26" width="6" height="4" fill="#fafafa" stroke="#8a9aa8"/><rect x="19" y="26" width="6" height="4" fill="#fafafa" stroke="#8a9aa8"/></svg>
<svg style="left:308px;top:822px" width="32" height="33"><path d="M14 6 Q26 2 26 14 Q26 22 20 24 V29 H12 V24 Q6 20 8 12Z" fill="#f0a830" stroke="#b87010"/><circle cx="10" cy="11" r="8" fill="#fff" stroke="#6a7a90" stroke-width="1.5"/><path d="M10 5v6h5" stroke="#222" stroke-width="1.3" fill="none"/><rect x="2" y="29" width="28" height="3" fill="#7a90a8"/></svg>
<svg style="left:370px;top:826px" width="34" height="22"><path d="M1 9 L18 1 L33 7 L16 17Z" fill="#f6e890" stroke="#b8a040"/><path d="M1 9 L16 17 V21 L1 13Z" fill="#d8b838"/><path d="M16 17 L33 7 V11 L16 21Z" fill="#c8a830"/><path d="M8 8 L22 3" stroke="#8a7a30"/></svg>
<svg style="left:432px;top:825px" width="32" height="25"><rect x="1" y="1" width="30" height="23" fill="#3a80d0" stroke="#dfeffa" stroke-width="1.5"/><path d="M7 5 L14 10 L7 15" fill="none" stroke="#fff" stroke-width="2.2"/><rect x="3" y="19" width="26" height="3" fill="#9ac8f0"/></svg>
<svg style="left:497px;top:822px" width="30" height="34"><path d="M4 1 H22 Q25 1 25 4 V30 H4Z" fill="#f8f0d0" stroke="#b8a878"/><path d="M8 7h13M8 10h13M8 13h13M8 16h10" stroke="#8a8a8a"/><path d="M1 28 Q4 32 8 30" fill="#e8dcb0" stroke="#b8a878"/><rect x="14" y="20" width="15" height="12" fill="#7a8490" stroke="#4a5258"/><rect x="18" y="18" width="7" height="3" fill="none" stroke="#4a5258"/></svg>
<svg style="left:557px;top:824px" width="30" height="30"><defs><linearGradient id="np" x1="0" y1="0" x2="1" y2="1"><stop offset="0" stop-color="#eaf6fc"/><stop offset="0.5" stop-color="#9fd0ec"/><stop offset="1" stop-color="#5aa8d8"/></linearGradient></defs><path d="M7 2 H25 L22 27 H1Z" fill="url(#np)" stroke="#d8eef8"/><path d="M24 3 Q28 8 27 28 L21 27 Z" fill="#f4f8fa" stroke="#a8b8c0"/><path d="M2 27 H22" stroke="#e8f4fa" stroke-width="2"/></svg>
<svg style="left:937px;top:834px" width="8" height="6"><path d="M0 5 L4 0.5 L8 5Z" fill="#000"/></svg>
<svg style="left:957px;top:828px" width="18" height="20"><path d="M2 1 V19" stroke="#000" stroke-width="1.2"/><path d="M2 2 H12 L10 6 L13 9 H2Z" fill="#fff" stroke="#555"/><circle cx="12.5" cy="14" r="4.2" fill="#e05050" stroke="#fff"/><path d="M10.5 12l4 4M14.5 12l-4 4" stroke="#fff" stroke-width="1.2"/></svg>
<svg style="left:981px;top:829px" width="18" height="20"><rect x="4" y="3" width="12" height="11" fill="#d8ecf8" stroke="#345"/><circle cx="3" cy="3" r="2.5" fill="#fff" stroke="#222"/><path d="M3 5.5v12" stroke="#222"/><path d="M11 12 L15 19 H7Z" fill="#f0c020" stroke="#806010"/></svg>
<svg style="left:1004px;top:829px" width="18" height="19"><path d="M1 6 H5 L10 1 V17 L5 12 H1Z" fill="#fff" stroke="#555"/><circle cx="13" cy="13" r="4.2" fill="#e05050" stroke="#fff"/><path d="M11 11l4 4M15 11l-4 4" stroke="#fff" stroke-width="1.2"/></svg>
<div class="a" style="left:1035px;top:830px;font-size:12px;line-height:16px;color:#10202a;letter-spacing:-0.3px">ENG</div>
<div class="a" style="left:1090px;top:822px;font-size:12px;line-height:16px;color:#10202a;letter-spacing:-0.8px">17:58</div>
<div class="a" style="left:1076px;top:838px;font-size:12px;line-height:16px;color:#10202a;letter-spacing:-0.8px">10.07.2019</div>
</body></html>
